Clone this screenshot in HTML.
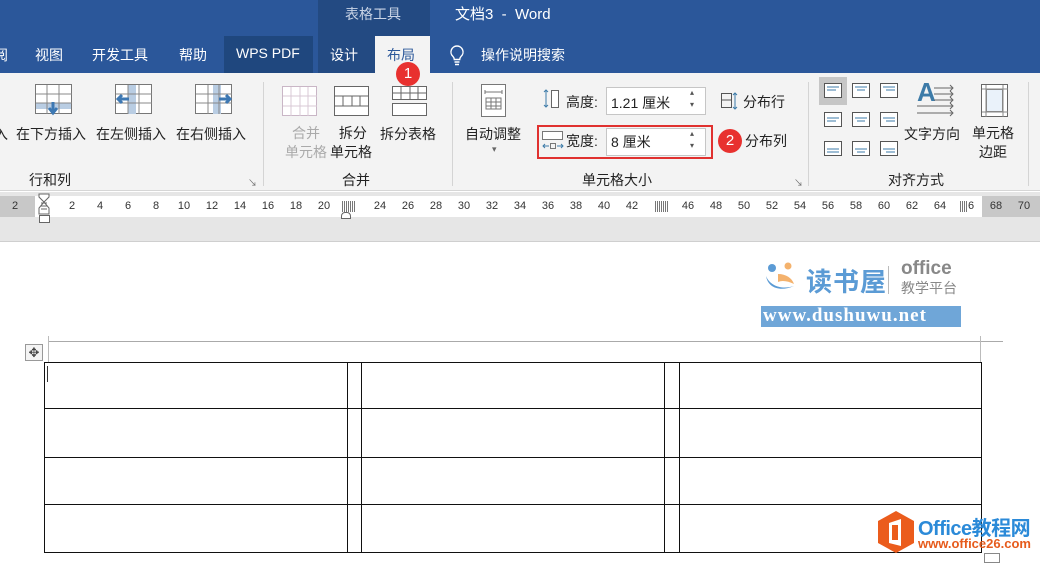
<!DOCTYPE html>
<html><head><meta charset="utf-8">
<style>
*{margin:0;padding:0;box-sizing:border-box}
body{width:1040px;height:560px;overflow:hidden;position:relative;background:#fff;font-family:"Liberation Sans","Noto Sans CJK SC",sans-serif;font-size:14px;color:#222}
.a{position:absolute}
.t{position:absolute;white-space:nowrap}
.w{color:#fff}
.badge{position:absolute;width:24px;height:24px;border-radius:50%;background:#e8312f;color:#fff;font-size:15px;text-align:center;line-height:24px;z-index:5}
.sep{position:absolute;top:82px;width:1px;height:104px;background:#d4d4d4}
.rn{position:absolute;top:200px;font-size:11px;color:#333;width:20px;text-align:center;margin-left:-10px}
</style></head><body>
<div class="a" style="left:0;top:0;width:1040px;height:73px;background:#2b579a"></div>
<div class="a" style="left:318px;top:0;width:112px;height:73px;background:#234a82"></div>
<div class="t" style="left:345px;top:4px;color:#c9d4e6;font-size:14px">表格工具</div>
<div class="t w" style="left:455px;top:3px;font-size:15px">文档3 &nbsp;- &nbsp;Word</div>
<div class="t w" style="left:-6px;top:45px">阅</div>
<div class="t w" style="left:35px;top:45px">视图</div>
<div class="t w" style="left:92px;top:45px">开发工具</div>
<div class="t w" style="left:179px;top:45px">帮助</div>
<div class="a" style="left:224px;top:36px;width:89px;height:37px;background:#1f477e"></div>
<div class="t w" style="left:236px;top:45px">WPS PDF</div>
<div class="t w" style="left:330px;top:45px">设计</div>
<div class="a" style="left:375px;top:36px;width:55px;height:37px;background:#f3f3f3"></div>
<div class="t" style="left:387px;top:45px;color:#2b579a">布局</div>
<svg class="a" style="left:448px;top:44px" width="18" height="22"><path d="M9 2a6 6 0 0 0-4 10.5c1 1 1.3 2 1.3 3h5.4c0-1 .3-2 1.3-3A6 6 0 0 0 9 2zM6.5 18h5M7 20.5h4" fill="none" stroke="#fff" stroke-width="1.4"/></svg>
<div class="t w" style="left:481px;top:45px">操作说明搜索</div>
<div class="a" style="left:0;top:73px;width:1040px;height:118px;background:#f3f3f3;border-bottom:1px solid #d6d6d6"></div>
<div class="badge" style="left:396px;top:62px">1</div>
<div class="sep" style="left:263px"></div><div class="sep" style="left:452px"></div><div class="sep" style="left:808px"></div><div class="sep" style="left:1028px"></div>
<svg class="a" style="left:35px;top:84px" width="38" height="34"><g stroke="#777" fill="#fff"><rect x=".5" y=".5" width="36" height="29"/></g><rect x="1" y="19" width="35" height="6" fill="#b9cde3"/><g stroke="#888"><path d="M1 10h36M1 19h36M12 1v29M24 1v29"/></g><path d="M18 18v10M14 24l4 5 4-5" stroke="#3d78b3" stroke-width="3" fill="none"/></svg>
<svg class="a" style="left:115px;top:84px" width="38" height="34"><rect x=".5" y=".5" width="36" height="29" fill="#fff" stroke="#777"/><rect x="13" y="1" width="8" height="29" fill="#b9cde3"/><path d="M1 10h36M1 19h36M13 1v29M24 1v29" stroke="#888"/><path d="M14 15H3M7 11l-4 4 4 4" stroke="#3d78b3" stroke-width="3" fill="none"/></svg>
<svg class="a" style="left:195px;top:84px" width="38" height="34"><rect x=".5" y=".5" width="36" height="29" fill="#fff" stroke="#777"/><rect x="18" y="1" width="8" height="29" fill="#b9cde3"/><path d="M1 10h36M1 19h36M13 1v29M24 1v29" stroke="#888"/><path d="M24 15h11M31 11l4 4-4 4" stroke="#3d78b3" stroke-width="3" fill="none"/></svg>
<div class="t" style="left:-6px;top:124px">入</div>
<div class="t" style="left:16px;top:124px">在下方插入</div>
<div class="t" style="left:96px;top:124px">在左侧插入</div>
<div class="t" style="left:176px;top:124px">在右侧插入</div>
<div class="t" style="left:29px;top:170px">行和列</div>
<div class="t" style="left:248px;top:176px;font-size:9px;color:#666">↘</div>
<svg class="a" style="left:282px;top:86px" width="36" height="32"><rect x=".5" y=".5" width="34" height="29" fill="#fff" stroke="#c9b6c6"/><path d="M1 10h34M1 20h34M9 1v29M18 1v29M26 1v29" stroke="#d8c9d6"/></svg>
<svg class="a" style="left:334px;top:86px" width="36" height="32"><rect x=".5" y=".5" width="34" height="29" fill="#fff" stroke="#666"/><path d="M1 10h34M1 20h34M9 10v10M18 10v10M26 10v10" stroke="#666"/></svg>
<svg class="a" style="left:392px;top:86px" width="36" height="32"><rect x=".5" y=".5" width="34" height="13" fill="#fff" stroke="#666"/><rect x=".5" y="17.5" width="34" height="12" fill="#fff" stroke="#666"/><path d="M1 7h34M9 1v13M18 1v13M26 1v13" stroke="#666"/></svg>
<div class="t" style="left:285px;top:124px;color:#aaa;line-height:19px;text-align:center">合并<br>单元格</div>
<div class="t" style="left:330px;top:124px;line-height:19px;text-align:center">&nbsp;拆分<br>单元格</div>
<div class="t" style="left:380px;top:124px">拆分表格</div>
<div class="t" style="left:342px;top:170px">合并</div>
<svg class="a" style="left:481px;top:84px" width="26" height="34"><rect x=".5" y=".5" width="24" height="32" fill="#fff" stroke="#777"/><path d="M4 8h17M4 6v4M21 6v4" stroke="#777"/><rect x="5" y="14" width="15" height="11" fill="none" stroke="#777"/><path d="M5 18h15M5 22h15M10 14v11M15 14v11" stroke="#777"/></svg>
<div class="t" style="left:465px;top:124px">自动调整</div>
<div class="t" style="left:492px;top:144px;font-size:9px;color:#666">▾</div>
<svg class="a" style="left:543px;top:88px" width="18" height="22"><path d="M3 2v17M1 4l2-2 2 2M1 17l2 2 2-2" stroke="#3d7ba8" fill="none"/><rect x="8.5" y="2.5" width="7" height="17" fill="#fff" stroke="#666"/></svg>
<div class="t" style="left:566px;top:92px">高度:</div>
<div class="a" style="left:606px;top:87px;width:100px;height:28px;border:1px solid #c6c6c6;background:#fff"></div>
<div class="t" style="left:611px;top:93px">1.21 厘米</div>
<div class="t" style="left:690px;top:87px;font-size:8px;color:#555;line-height:12px">▴<br>▾</div>
<svg class="a" style="left:721px;top:92px" width="18" height="18"><rect x=".5" y="1.5" width="10" height="14" fill="none" stroke="#555"/><path d="M1 8h10" stroke="#555"/><path d="M14 1v16M12 3l2-2 2 2M12 15l2 2 2-2" stroke="#3d7ba8" fill="none"/></svg>
<div class="t" style="left:743px;top:92px">分布行</div>
<div class="a" style="left:537px;top:125px;width:176px;height:34px;border:2px solid #e0312f"></div>
<svg class="a" style="left:542px;top:130px" width="22" height="22"><rect x=".5" y="1.5" width="20" height="8" fill="#fff" stroke="#777"/><path d="M1 16h6M3 14l-2 2 2 2M15 16h6M19 14l2 2-2 2" stroke="#3d7ba8" fill="none"/><rect x="8.5" y="13.5" width="5" height="5" fill="none" stroke="#777"/></svg>
<div class="t" style="left:566px;top:131px">宽度:</div>
<div class="a" style="left:606px;top:128px;width:100px;height:28px;border:1px solid #c6c6c6;background:#fff"></div>
<div class="t" style="left:611px;top:132px">8 厘米</div>
<div class="t" style="left:690px;top:128px;font-size:8px;color:#555;line-height:12px">▴<br>▾</div>
<div class="badge" style="left:718px;top:129px">2</div>
<div class="t" style="left:745px;top:131px">分布列</div>
<div class="t" style="left:582px;top:170px">单元格大小</div>
<div class="t" style="left:794px;top:176px;font-size:9px;color:#666">↘</div>
<div class="a" style="left:819px;top:77px;width:28px;height:28px;background:#c6c6c6"></div>
<svg class="a" style="left:822px;top:80px" width="80" height="80"><g fill="#fff" stroke="#555"><rect x="2.5" y="3.5" width="17" height="14"/><rect x="30.5" y="3.5" width="17" height="14"/><rect x="58.5" y="3.5" width="17" height="14"/><rect x="2.5" y="32.5" width="17" height="14"/><rect x="30.5" y="32.5" width="17" height="14"/><rect x="58.5" y="32.5" width="17" height="14"/><rect x="2.5" y="61.5" width="17" height="14"/><rect x="30.5" y="61.5" width="17" height="14"/><rect x="58.5" y="61.5" width="17" height="14"/></g><g stroke="#3d7ba8"><path d="M5 7h12M5 10h9M33 7h12M35 10h8M61 7h12M64 10h9M5 38h12M5 41h9M33 38h12M35 41h8M61 38h12M64 41h9M5 69h12M5 72h12M33 69h12M35 72h8M61 69h12M64 72h9"/></g></svg>
<div class="t" style="left:917px;top:78px;font-size:26px;font-weight:bold;color:#3d7ba8;line-height:28px">A</div>
<svg class="a" style="left:917px;top:84px" width="38" height="36"><path d="M17 4h19M17 10h19M17 16h19M0 22h36M0 29h36M33 1l3 3-3 3M33 7l3 3-3 3M33 13l3 3-3 3M33 19l3 3-3 3M33 26l3 3-3 3" stroke="#666" fill="none"/></svg>
<div class="t" style="left:904px;top:124px">文字方向</div>
<svg class="a" style="left:981px;top:84px" width="28" height="34"><rect x=".5" y=".5" width="26" height="32" fill="#fff" stroke="#666"/><rect x="5.5" y="5.5" width="16" height="22" fill="#eaf2fa" stroke="#888"/><path d="M1 5h26M1 28h26M5 1v32M22 1v32" stroke="#888"/></svg>
<div class="t" style="left:972px;top:124px;line-height:19px;text-align:center">单元格<br>边距</div>
<div class="t" style="left:888px;top:170px">对齐方式</div>
<div class="a" style="left:0;top:192px;width:1040px;height:50px;background:#e6e6e6;border-bottom:1px solid #cfcfcf"></div>
<div class="a" style="left:0;top:196px;width:1040px;height:21px;background:#fff"></div>
<div class="a" style="left:0;top:196px;width:35px;height:21px;background:#c8c8c8"></div>
<div class="a" style="left:982px;top:196px;width:58px;height:21px;background:#c8c8c8"></div>
<div class="rn" style="left:15px">2</div><div class="rn" style="left:72px">2</div><div class="rn" style="left:100px">4</div><div class="rn" style="left:128px">6</div><div class="rn" style="left:156px">8</div><div class="rn" style="left:184px">10</div><div class="rn" style="left:212px">12</div><div class="rn" style="left:240px">14</div><div class="rn" style="left:268px">16</div><div class="rn" style="left:296px">18</div><div class="rn" style="left:324px">20</div><div class="rn" style="left:380px">24</div><div class="rn" style="left:408px">26</div><div class="rn" style="left:436px">28</div><div class="rn" style="left:464px">30</div><div class="rn" style="left:492px">32</div><div class="rn" style="left:520px">34</div><div class="rn" style="left:548px">36</div><div class="rn" style="left:576px">38</div><div class="rn" style="left:604px">40</div><div class="rn" style="left:632px">42</div><div class="rn" style="left:688px">46</div><div class="rn" style="left:716px">48</div><div class="rn" style="left:744px">50</div><div class="rn" style="left:772px">52</div><div class="rn" style="left:800px">54</div><div class="rn" style="left:828px">56</div><div class="rn" style="left:856px">58</div><div class="rn" style="left:884px">60</div><div class="rn" style="left:912px">62</div><div class="rn" style="left:940px">64</div><div class="rn" style="left:968px">66</div><div class="rn" style="left:996px">68</div><div class="rn" style="left:1024px">70</div>
<svg class="a" style="left:38px;top:193px" width="14" height="32"><path d="M1 1h10v3l-5 5-5-5zM6 9l-5 6v6h10v-6z" fill="#fff" stroke="#666"/><rect x="1.5" y="22.5" width="10" height="7" fill="#fff" stroke="#666"/><path d="M3 10h6M3 13h6M3 16h6" stroke="#666"/></svg>
<div class="a" style="left:342px;top:201px;width:14px;height:11px;background:repeating-linear-gradient(90deg,#777 0 1px,#fff 1px 2px)"></div>
<div class="a" style="left:655px;top:201px;width:14px;height:11px;background:repeating-linear-gradient(90deg,#777 0 1px,#fff 1px 2px)"></div>
<div class="a" style="left:960px;top:201px;width:8px;height:11px;background:repeating-linear-gradient(90deg,#777 0 1px,#fff 1px 2px)"></div>
<div class="a" style="left:341px;top:212px;width:10px;height:7px;border:1px solid #666;border-radius:4px 4px 0 0;background:#fff"></div>
<svg class="a" style="left:762px;top:260px" width="50" height="40"><circle cx="10" cy="8" r="4" fill="#5b9bd5"/><circle cx="26" cy="6" r="3.5" fill="#f4b26d"/><path d="M4 16c2 12 14 16 28 10C20 30 8 26 4 16z" fill="#5b9bd5"/><path d="M16 14c8 0 14 4 16 10-6-3-12-4-16-2z" fill="#f4b26d"/></svg>
<div class="t" style="left:806px;top:262px;font-size:26px;color:#5b9bd5;font-weight:bold;letter-spacing:1px">读书屋</div>
<div class="a" style="left:888px;top:266px;width:1px;height:28px;background:#bbb"></div>
<div class="t" style="left:901px;top:258px;font-size:19px;color:#888;font-weight:bold">office</div>
<div class="t" style="left:901px;top:278px;font-size:14px;color:#888">教学平台</div>
<div class="a" style="left:761px;top:306px;width:200px;height:21px;background:#6fa6d8"></div>
<div class="t" style="left:763px;top:305px;font-family:'Liberation Serif',serif;font-weight:bold;font-size:19px;color:#fff;letter-spacing:1px">www.dushuwu.net</div>
<div class="a" style="left:48px;top:341px;width:955px;height:1px;background:#aaa"></div>
<div class="a" style="left:48px;top:336px;width:1px;height:26px;background:#bbb"></div>
<div class="a" style="left:980px;top:336px;width:1px;height:26px;background:#bbb"></div>
<div class="a" style="left:25px;top:344px;width:18px;height:17px;border:1px solid #999;background:#f4f4f4;font-size:13px;line-height:15px;text-align:center;color:#444">✥</div>
<div class="a" style="left:44px;top:362px;width:938px;height:191px;border:1px solid #111"></div>
<div class="a" style="left:44px;top:408px;width:938px;height:1px;background:#111"></div>
<div class="a" style="left:44px;top:457px;width:938px;height:1px;background:#111"></div>
<div class="a" style="left:44px;top:504px;width:938px;height:1px;background:#111"></div>
<div class="a" style="left:347px;top:362px;width:1px;height:191px;background:#111"></div>
<div class="a" style="left:361px;top:362px;width:1px;height:191px;background:#111"></div>
<div class="a" style="left:664px;top:362px;width:1px;height:191px;background:#111"></div>
<div class="a" style="left:679px;top:362px;width:1px;height:191px;background:#111"></div>
<div class="a" style="left:47px;top:366px;width:1px;height:16px;background:#333"></div>
<div class="a" style="left:984px;top:553px;width:16px;height:10px;border:1px solid #888;background:#fff"></div>
<svg class="a" style="left:876px;top:510px" width="40" height="44"><path d="M20 1l18 10v22L20 43 2 33V11z" fill="#eb5c1c"/><path d="M13 13l12-4v27l-12-3z" fill="#fff"/><rect x="16" y="15" width="6" height="15" fill="#eb5c1c"/></svg>
<div class="t" style="left:918px;top:512px;font-size:20px;font-weight:bold;color:#2b8ad8;letter-spacing:-0.5px">Office教程网</div>
<div class="t" style="left:918px;top:536px;font-size:13px;font-weight:bold;color:#e65b1c">www.office26.com</div>
</body></html>
